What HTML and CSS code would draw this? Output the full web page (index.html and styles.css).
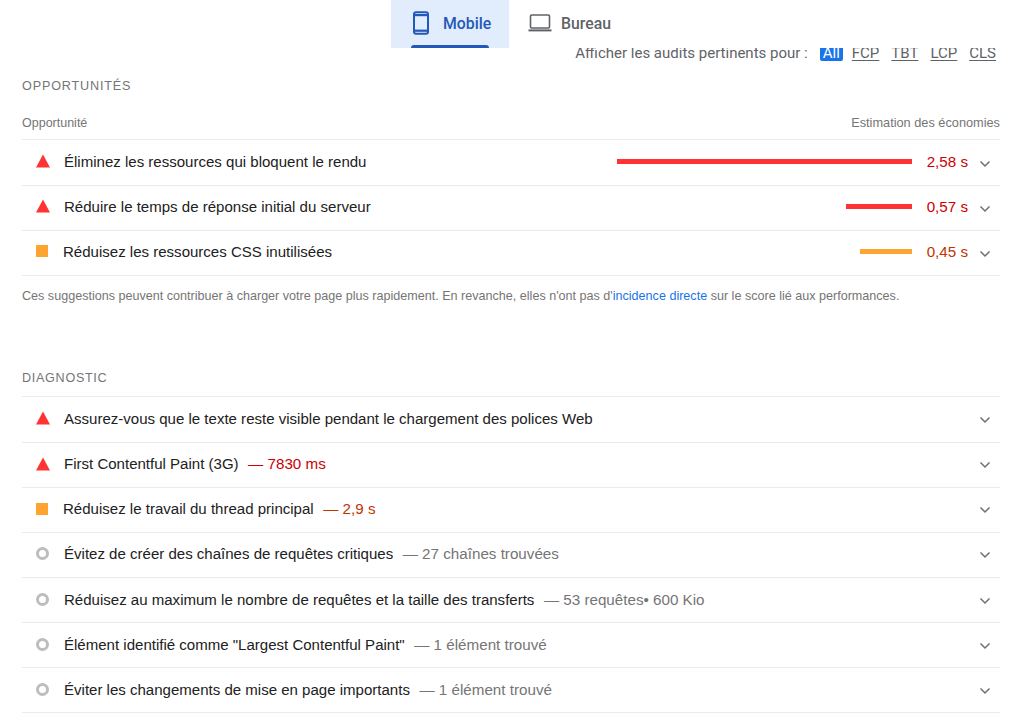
FILE: index.html
```html
<!DOCTYPE html>
<html lang="fr">
<head>
<meta charset="utf-8">
<title>PageSpeed Insights</title>
<link rel="stylesheet" href="styles.css">
</head>
<body>
<nav class="tabs">
  <div class="tab active">
    <svg class="tab-icon" width="18" height="24" viewBox="0 0 18 24"><rect x="2" y="1.2" width="14" height="21.6" rx="2" fill="none" stroke="#2458b8" stroke-width="2"/><rect x="2" y="3" width="14" height="2.2" fill="#2458b8"/><rect x="2" y="18.6" width="14" height="2.2" fill="#2458b8"/></svg>
    <span>Mobile</span>
    <i class="tab-bar"></i>
  </div>
  <div class="tab">
    <svg class="tab-icon" width="24" height="20" viewBox="0 0 24 20"><rect x="2.5" y="2" width="19" height="13" rx="1" fill="none" stroke="#5f6368" stroke-width="1.6"/><rect x="0.5" y="16.4" width="23" height="2" fill="#5f6368"/></svg>
    <span>Bureau</span>
  </div>
</nav>
<main class="report">
  <div class="filter">
    <span class="filter-label">Afficher les audits pertinents pour :</span>
    <span class="chip on">All</span><span class="chip">FCP</span><span class="chip">TBT</span><span class="chip">LCP</span><span class="chip">CLS</span>
  </div>

  <h2 class="title first">OPPORTUNITÉS</h2>
  <div class="head"><span>Opportunité</span><span class="head-right">Estimation des économies</span></div>
  <ul class="list opp">
    <li class="row"><svg class="ic" width="14" height="14" viewBox="0 0 14 14"><path d="M7 .5 14 13.5H0z" fill="#ff3333"/></svg><span class="name">Éliminez les ressources qui bloquent le rendu</span><span class="track"><i class="bar red" style="width:295px"></i></span><span class="val red-t">2,58 s</span><svg class="chev" width="12" height="8" viewBox="0 0 12 8"><path d="M1.5 1.5 6 6l4.5-4.5" fill="none" stroke="#6f6f6f" stroke-width="1.5"/></svg></li>
    <li class="row"><svg class="ic" width="14" height="14" viewBox="0 0 14 14"><path d="M7 .5 14 13.5H0z" fill="#ff3333"/></svg><span class="name">Réduire le temps de réponse initial du serveur</span><span class="track"><i class="bar red" style="width:66px"></i></span><span class="val red-t">0,57 s</span><svg class="chev" width="12" height="8" viewBox="0 0 12 8"><path d="M1.5 1.5 6 6l4.5-4.5" fill="none" stroke="#6f6f6f" stroke-width="1.5"/></svg></li>
    <li class="row"><i class="sq"></i><span class="name">Réduisez les ressources CSS inutilisées</span><span class="track"><i class="bar orange" style="width:52px"></i></span><span class="val orange-t">0,45 s</span><svg class="chev" width="12" height="8" viewBox="0 0 12 8"><path d="M1.5 1.5 6 6l4.5-4.5" fill="none" stroke="#6f6f6f" stroke-width="1.5"/></svg></li>
  </ul>
  <p class="note">Ces suggestions peuvent contribuer à charger votre page plus rapidement. En revanche, elles n'ont pas d'<a href="#">incidence directe</a> sur le score lié aux performances.</p>

  <h2 class="title second">DIAGNOSTIC</h2>
  <ul class="list">
    <li class="row"><svg class="ic" width="14" height="14" viewBox="0 0 14 14"><path d="M7 .5 14 13.5H0z" fill="#ff3333"/></svg><span class="name">Assurez-vous que le texte reste visible pendant le chargement des polices Web</span><svg class="chev end" width="12" height="8" viewBox="0 0 12 8"><path d="M1.5 1.5 6 6l4.5-4.5" fill="none" stroke="#6f6f6f" stroke-width="1.5"/></svg></li>
    <li class="row"><svg class="ic" width="14" height="14" viewBox="0 0 14 14"><path d="M7 .5 14 13.5H0z" fill="#ff3333"/></svg><span class="name">First Contentful Paint (3G)</span><span class="extra red-t">— 7830 ms</span><svg class="chev end" width="12" height="8" viewBox="0 0 12 8"><path d="M1.5 1.5 6 6l4.5-4.5" fill="none" stroke="#6f6f6f" stroke-width="1.5"/></svg></li>
    <li class="row"><i class="sq"></i><span class="name">Réduisez le travail du thread principal</span><span class="extra orange-t">— 2,9 s</span><svg class="chev end" width="12" height="8" viewBox="0 0 12 8"><path d="M1.5 1.5 6 6l4.5-4.5" fill="none" stroke="#6f6f6f" stroke-width="1.5"/></svg></li>
    <li class="row"><i class="ring"></i><span class="name">Évitez de créer des chaînes de requêtes critiques</span><span class="extra">— 27 chaînes trouvées</span><svg class="chev end" width="12" height="8" viewBox="0 0 12 8"><path d="M1.5 1.5 6 6l4.5-4.5" fill="none" stroke="#6f6f6f" stroke-width="1.5"/></svg></li>
    <li class="row"><i class="ring"></i><span class="name">Réduisez au maximum le nombre de requêtes et la taille des transferts</span><span class="extra">— 53 requêtes• 600 Kio</span><svg class="chev end" width="12" height="8" viewBox="0 0 12 8"><path d="M1.5 1.5 6 6l4.5-4.5" fill="none" stroke="#6f6f6f" stroke-width="1.5"/></svg></li>
    <li class="row"><i class="ring"></i><span class="name">Élément identifié comme "Largest Contentful Paint"</span><span class="extra">— 1 élément trouvé</span><svg class="chev end" width="12" height="8" viewBox="0 0 12 8"><path d="M1.5 1.5 6 6l4.5-4.5" fill="none" stroke="#6f6f6f" stroke-width="1.5"/></svg></li>
    <li class="row"><i class="ring"></i><span class="name">Éviter les changements de mise en page importants</span><span class="extra">— 1 élément trouvé</span><svg class="chev end" width="12" height="8" viewBox="0 0 12 8"><path d="M1.5 1.5 6 6l4.5-4.5" fill="none" stroke="#6f6f6f" stroke-width="1.5"/></svg></li>
  </ul>
</main>
</body>
</html>
```
FILE: styles.css
```css
* { box-sizing: border-box; }
html, body { margin: 0; padding: 0; background: #fff; }
body { font-family: "Liberation Sans", Arial, sans-serif; color: #212121; width: 1024px; height: 716px; overflow: hidden; }

.tabs { display: flex; height: 48px; background: #fff; position: relative; z-index: 1; margin-left: 391px; width: 633px; }
.tab { position: relative; display: flex; align-items: center; gap: 13px; height: 48px; width: 118px; padding-left: 21px; padding-bottom: 2px; font: 500 15.8px Roboto, sans-serif; color: #5f6368; }
.tab.active { background: #e1edfc; color: #2458b8; }
.tab:not(.active) { padding-left: 19px; gap: 9px; }
.tab-bar { position: absolute; left: 20px; bottom: 0; width: 78px; height: 3px; background: #2458b8; border-radius: 3px 3px 0 0; }

.report { padding: 0 24px 0 22px; }

.filter { display: flex; justify-content: flex-end; align-items: center; height: 18px; margin-top: -4px; font: 15px/18px Roboto, sans-serif; color: #5f6368; padding-right: 4px; }
.filter-label { margin-right: 12px; }
.chip { margin-left: 12px; text-decoration: underline; text-underline-offset: 2px; }
.chip.on { background: #1a73e8; color: #fff; text-decoration: none; padding: 0 3px; border-radius: 2px; margin-left: 0; margin-right: -3px; line-height: 16px; }

.title { margin: 0; font-size: 12.6px; font-weight: 400; letter-spacing: .7px; color: #757575; line-height: 16px; }
.title.first { margin-top: 16px; letter-spacing: .85px; }
.title.second { margin-top: 66px; padding-bottom: 10px; }

.head { display: flex; justify-content: space-between; margin-top: 21px; height: 24px; font-size: 12.5px; line-height: 16px; color: #757575; }
.head-right { font-size: 12.75px; }

.list { list-style: none; margin: 0; padding: 0; border-top: 1px solid #ebebeb; }
.list.opp { padding-top: 1px; }
.row { display: flex; align-items: center; height: 45.15px; border-bottom: 1px solid #ebebeb; font-size: 15.04px; padding: 0 9px 2px 14px; }
.opp .row { padding-bottom: 4px; }
.ic { flex: none; margin-right: 14px; }
.sq { flex: none; width: 12px; height: 12px; background: #ffa431; margin-right: 15px; }
.ring { flex: none; width: 13px; height: 13px; border: 3px solid #bdbdbd; border-radius: 50%; margin-right: 15px; }
.name { color: #212121; white-space: nowrap; }
.extra { margin-left: 9.5px; font-size: 15.2px; color: #757575; white-space: nowrap; }
.red-t { color: #cc0000; }
.orange-t { color: #c33300; }

.track { flex: 1; display: flex; justify-content: flex-end; }
.bar { display: block; height: 5px; }
.bar.red { background: #ff3333; }
.bar.orange { background: #ffa431; }
.val { width: 56px; text-align: right; font-size: 15.2px; }
.chev { flex: none; margin-left: 11px; margin-top: 3px; }
.opp .chev { margin-top: 5px; }
.chev.end { margin-left: auto; }

.note { margin: 12px 0 0; font-size: 12.58px; line-height: 16px; color: #757575; white-space: nowrap; }
.note a { color: #1a73e8; text-decoration: none; }
```
